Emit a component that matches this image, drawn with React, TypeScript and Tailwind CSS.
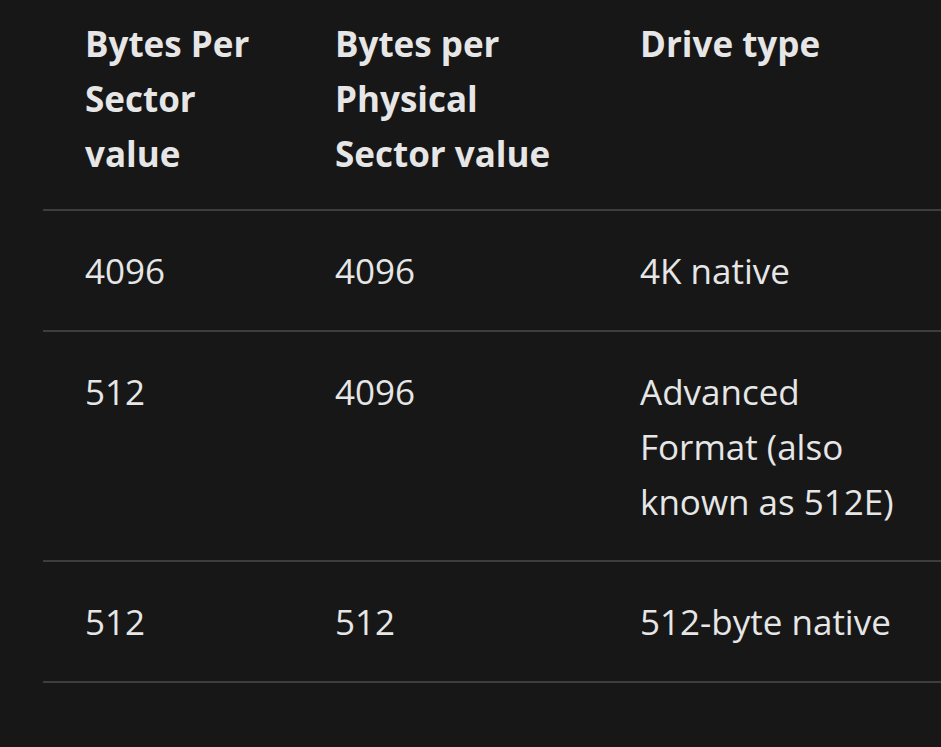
const rows = [
  { perSector: "4096", perPhysical: "4096", drive: "4K native" },
  { perSector: "512", perPhysical: "4096", drive: "Advanced Format (also known as 512E)" },
  { perSector: "512", perPhysical: "512", drive: "512-byte native" },
];

export default function App() {
  return (
    <div className="min-h-screen w-full overflow-hidden bg-[#171717] text-[#e6e6e6] font-['Open_Sans','Noto_Sans',sans-serif]">
      <div className="pl-[43px]">
        <table className="table-fixed border-collapse w-[900px] text-[35px] leading-[55px]">
          <colgroup>
            <col className="w-[250px]" />
            <col className="w-[305px]" />
            <col className="w-[345px]" />
          </colgroup>
          <thead>
            <tr className="border-b-2 border-[#3d3d3d]">
              <th className="text-left align-top font-bold pl-[42px] pr-[30px] pt-[16px] pb-[28px]">Bytes Per Sector value</th>
              <th className="text-left align-top font-bold pl-[42px] pr-[30px] pt-[16px] pb-[28px]">Bytes per Physical Sector value</th>
              <th className="text-left align-top font-bold pl-[42px] pr-[30px] pt-[16px] pb-[28px]">Drive type</th>
            </tr>
          </thead>
          <tbody>
            {rows.map((r, i) => (
              <tr key={i} className="border-b-2 border-[#3d3d3d]">
                <td className="align-top px-[42px] pt-[32px] pb-[31.5px]">{r.perSector}</td>
                <td className="align-top px-[42px] pt-[32px] pb-[31.5px]">{r.perPhysical}</td>
                <td className="align-top px-[42px] pt-[32px] pb-[31.5px]">{r.drive}</td>
              </tr>
            ))}
          </tbody>
        </table>
      </div>
    </div>
  );
}
